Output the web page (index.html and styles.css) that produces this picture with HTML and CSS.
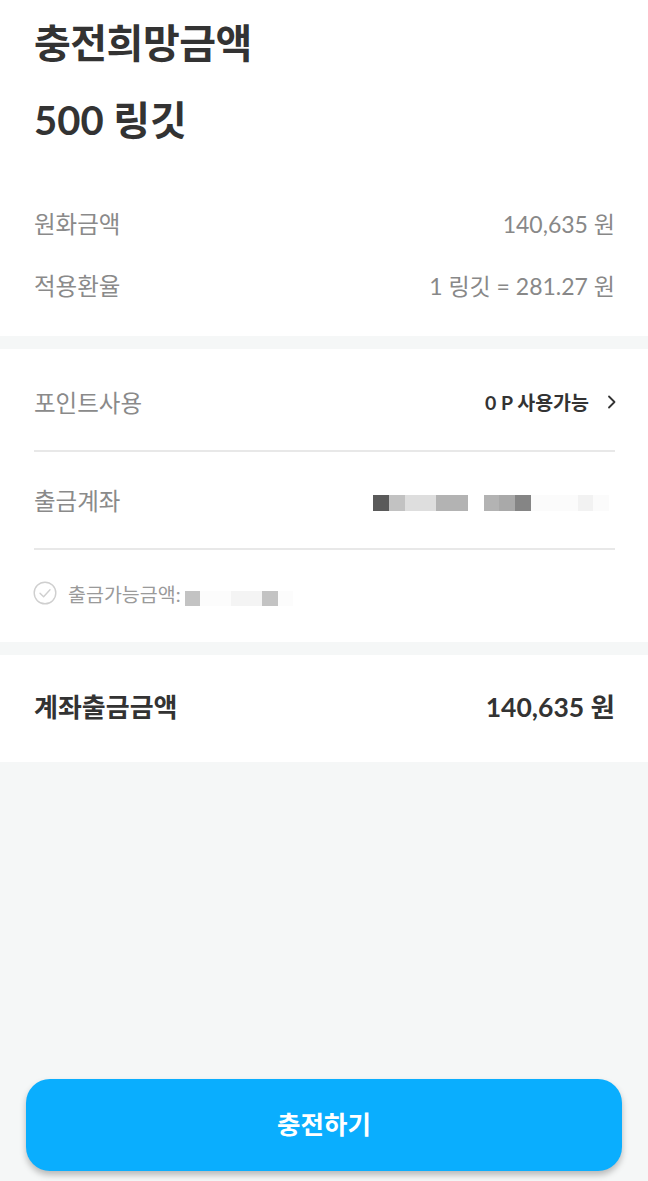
FILE: index.html
```html
<!DOCTYPE html>
<html lang="ko">
<head>
<meta charset="utf-8">
<link rel="stylesheet" href="styles.css">
</head>
<body>
<div class="page">
  <section class="card summary">
    <h1 class="title">충전희망금액</h1>
    <div class="amount">500 링깃</div>
    <div class="info">
      <div class="info-row"><span class="label">원화금액</span><span class="value">140,635 원</span></div>
      <div class="info-row"><span class="label">적용환율</span><span class="value">1 링깃 = 281.27 원</span></div>
    </div>
  </section>

  <section class="card options">
    <div class="opt-row first bordered">
      <span class="label">포인트사용</span>
      <span class="point">0 P 사용가능
        <svg class="chev" width="10" height="16" viewBox="0 0 10 16"><path d="M2 2.5 L7.5 8 L2 13.5" fill="none" stroke="#333" stroke-width="1.8" stroke-linecap="round" stroke-linejoin="round"/></svg>
      </span>
    </div>
    <div class="opt-row bordered">
      <span class="label">출금계좌</span>
      <span class="blur account">
        <i class="px p1"></i><i class="px p3"></i><i class="px p4"></i><i class="px p4"></i><i class="px p2"></i><i class="px p2"></i><i class="gap"></i><i class="px p2"></i><i class="px p2b"></i><i class="px p1b"></i><i class="px p5"></i><i class="px p5"></i><i class="px p5"></i><i class="px p6"></i><i class="px p5"></i>
      </span>
    </div>
    <div class="check-row">
      <svg class="check" width="24" height="24" viewBox="0 0 24 24"><circle cx="12" cy="12" r="10.8" fill="none" stroke="#cfcfcf" stroke-width="1.4"/><path d="M7 12.2 L10.6 15.8 L17 8.8" fill="none" stroke="#cfcfcf" stroke-width="1.4" stroke-linecap="round" stroke-linejoin="round"/></svg>
      <span class="avail">출금가능금액:</span>
      <span class="blur small">
        <i class="px q1"></i><i class="px q5"></i><i class="px q5"></i><i class="px q6"></i><i class="px q6"></i><i class="px q1"></i><i class="px q5"></i>
      </span>
    </div>
  </section>

  <section class="card total">
    <span class="total-label">계좌출금금액</span>
    <span class="total-value">140,635 원</span>
  </section>

  <div class="spacer"></div>

  <div class="footer">
    <button class="submit">충전하기</button>
  </div>
</div>
</body>
</html>
```

FILE: styles.css
```css
* { box-sizing: border-box; margin: 0; padding: 0; }
html, body { height: 100%; }
body {
  background: #f5f7f7;
  font-family: "Lato", "Noto Sans CJK KR", sans-serif;
  color: #333;
}
.page {
  min-height: 1181px;
  display: flex;
  flex-direction: column;
}
.card { background: #fff; padding: 0 33px 0 34px; }
.summary { height: 336px; padding-top: 18px; }
.title {
  font-size: 40px;
  font-weight: 700;
  line-height: 50px;
  color: #333;
  letter-spacing: -0.5px;
}
.amount {
  font-size: 40px;
  font-weight: 700;
  line-height: 50px;
  margin-top: 27px;
  color: #333;
}
.info { margin-top: 62px; display: flex; flex-direction: column; gap: 30px; }
.info-row {
  display: flex;
  justify-content: space-between;
  align-items: center;
  height: 32px;
}
.label { font-size: 23.5px; color: #8a8a8a; }
.value { font-size: 23px; color: #888; }

.options { margin-top: 13px; height: 293px; }
.opt-row {
  display: flex;
  justify-content: space-between;
  align-items: center;
  height: 98px;
}
.opt-row.first { height: 103px; padding-top: 4px; }
.bordered { border-bottom: 2px solid #e8e8e8; }
.point {
  display: flex;
  align-items: center;
  gap: 18px;
  font-size: 19.5px;
  font-weight: 700;
  color: #333;
  margin-right: -2px;
}
.chev { margin-top: 1px; }

.blur { display: flex; align-items: flex-start; }
.px { display: block; width: 15.7px; height: 16px; }
.account { margin-right: 6px; margin-top: 6px; }
.gap { display: block; width: 16px; }
.p1 { background: #5a5a5a; }
.p1b { background: #858585; }
.p2 { background: #b3b3b3; }
.p2b { background: #a9a9a9; }
.p3 { background: #c2c2c2; }
.p4 { background: #dedede; }
.p5 { background: #fbfbfb; }
.p6 { background: #f2f2f2; }

.check-row {
  display: flex;
  align-items: center;
  height: 92px;
  padding-bottom: 6px;
}
.check { margin-right: 11px; margin-left: -1px; }
.avail { font-size: 19.5px; color: #9a9a9a; }
.small { margin-left: 4px; margin-top: 10px; }
.q1 { background: #c3c3c3; width: 15.5px; height: 15px; }
.q5 { background: #fcfcfc; width: 15.5px; height: 15px; }
.q6 { background: #f4f4f4; width: 15.5px; height: 15px; }

.total {
  margin-top: 13px;
  height: 107px;
  display: flex;
  justify-content: space-between;
  align-items: center;
  padding-bottom: 6px;
}
.total-label { font-size: 26px; font-weight: 700; color: #333; }
.total-value { font-size: 26.5px; font-weight: 700; color: #333; }

.spacer { flex: 1; }
.footer { padding: 0 26px 10px; }
.submit {
  width: 100%;
  height: 92px;
  border: none;
  border-radius: 24px;
  background: #0aaefe;
  color: #fff;
  font-family: "Noto Sans CJK KR", sans-serif;
  font-size: 25.5px;
  font-weight: 700;
  padding-bottom: 6px;
  box-shadow: 0 4px 6px rgba(0, 0, 0, 0.25);
}
```
